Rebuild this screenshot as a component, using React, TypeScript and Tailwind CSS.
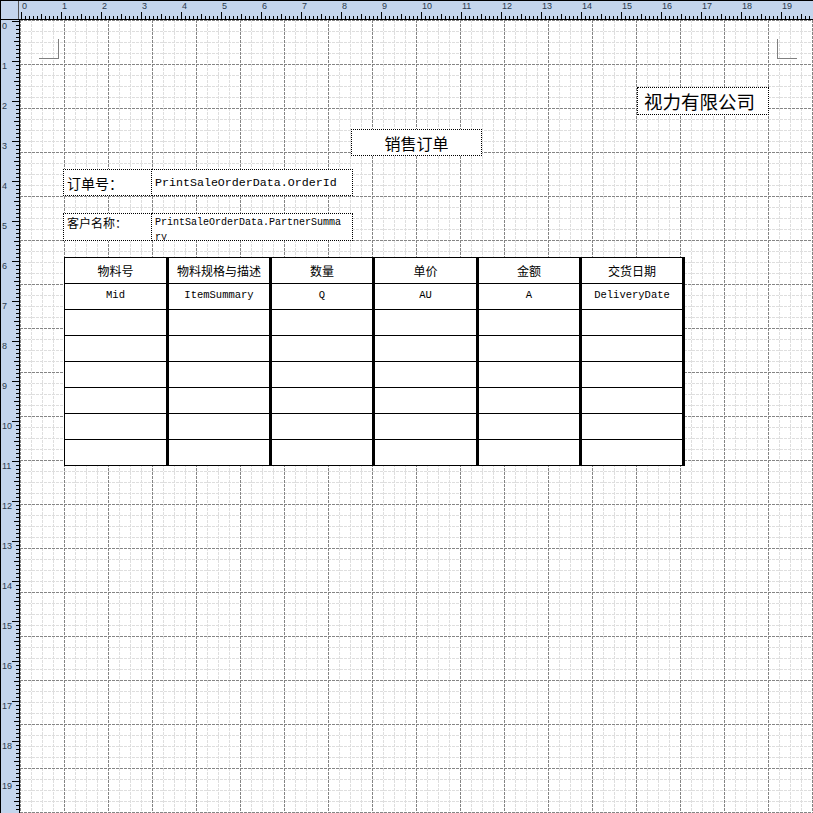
import React from "react";

const BLUE = "#c4d5ec";
const LABEL = "#2b3a4e";

function TopRuler() {
  const w = 793;
  const ticks = [];
  for (let k = 0; k <= 197; k++) {
    const x = 1 + 4 * k + 0.5;
    const len = k % 10 === 0 ? 7 : k % 5 === 0 ? 5 : 3;
    ticks.push(<line key={k} x1={x} x2={x} y1={19 - len} y2={19} stroke="#000" strokeWidth={1} />);
  }
  const labels = [];
  for (let n = 0; n <= 19; n++) {
    labels.push(
      <text key={n} x={1 + 40 * n + 1} y={9} fontSize={9} fill={LABEL} fontFamily="'Liberation Sans', Arial, sans-serif">
        {n}
      </text>
    );
  }
  return (
    <svg width={w} height={20} className="block">
      <rect x={0} y={0} width={w} height={20} fill={BLUE} />
      <line x1={0} x2={w} y1={0.5} y2={0.5} stroke="#000" />
      <line x1={0} x2={w} y1={19.5} y2={19.5} stroke="#000" />
      {ticks}
      {labels}
    </svg>
  );
}

function LeftRuler() {
  const h = 793;
  const ticks = [];
  for (let k = 0; k <= 197; k++) {
    const y = 1 + 4 * k + 0.5;
    const len = k % 10 === 0 ? 7 : k % 5 === 0 ? 5 : 3;
    ticks.push(<line key={k} y1={y} y2={y} x1={19 - len} x2={19} stroke="#000" strokeWidth={1} />);
  }
  const labels = [];
  for (let n = 0; n <= 19; n++) {
    labels.push(
      <text key={n} x={2} y={1 + 40 * n + 8} fontSize={9} fill={LABEL} fontFamily="'Liberation Sans', Arial, sans-serif">
        {n}
      </text>
    );
  }
  return (
    <svg width={20} height={h} className="block shrink-0">
      <rect x={0} y={0} width={20} height={h} fill={BLUE} />
      <line y1={0} y2={h} x1={0.5} x2={0.5} stroke="#000" />
      <line y1={0} y2={h} x1={19.5} x2={19.5} stroke="#000" />
      {ticks}
      {labels}
    </svg>
  );
}

function Grid() {
  const size = 793;
  const minor = [];
  const major = [];
  for (let k = 0; k <= 72; k++) {
    const p = 11 * k + 0.5;
    const arr = k % 4 === 0 ? major : minor;
    arr.push(<line key={"v" + k} x1={p} x2={p} y1={0} y2={size} />);
    arr.push(<line key={"h" + k} y1={p} y2={p} x1={0} x2={size} />);
  }
  return (
    <svg width={size} height={size} className="absolute left-0 top-0">
      <g stroke="#dedede" strokeWidth={1} strokeDasharray="3 1">
        {minor}
      </g>
      <g stroke="#858585" strokeWidth={1} strokeDasharray="3 1">
        {major}
      </g>
    </svg>
  );
}

const cjk = "font-['Noto_Sans_CJK_SC','Noto_Sans',sans-serif]";
const mono = "font-['Liberation_Mono','Courier_New',monospace]";

const headers = ["物料号", "物料规格与描述", "数量", "单价", "金额", "交货日期"];
const fields = ["Mid", "ItemSummary", "Q", "AU", "A", "DeliveryDate"];
const widths = ["w-[104px]", "w-[103px]", "w-[103px]", "w-[104px]", "w-[103px]", "w-[103px]"];

function Table() {
  const rows = [0, 1, 2, 3, 4, 5, 6, 7];
  return (
    <div className="absolute left-[44px] top-[237px] border-l border-t border-black bg-white flex flex-col">
      {rows.map((r) => (
        <div key={r} className="flex">
          {widths.map((w, c) => (
            <div
              key={c}
              className={`${w} h-[26px] border-r-[3px] border-b border-black flex items-center justify-center text-black`}
            >
              {r === 0 ? (
                <span className={`${cjk} text-[12px] leading-none`}>{headers[c]}</span>
              ) : r === 1 ? (
                <span className={`${mono} text-[10.5px] leading-none -mt-[2px]`}>{fields[c]}</span>
              ) : null}
            </div>
          ))}
        </div>
      ))}
    </div>
  );
}

export default function App() {
  return (
    <div className="w-[813px] h-[813px] bg-white overflow-hidden flex flex-col">
      <div className="flex h-[20px] shrink-0">
        <div className="w-[20px] h-[20px] shrink-0 bg-[#c4d5ec] border-t border-b border-l border-black">
          <div className="w-[18px] h-[18px] border-r border-[#555]" />
        </div>
        <TopRuler />
      </div>
      <div className="flex flex-1">
        <LeftRuler />
        <div className="relative w-[793px] h-[793px] bg-white">
          <Grid />
          {/* corner marks */}
          <div className="absolute left-[19px] top-[19px] w-[20px] h-[20px] border-r border-b border-[#808080]" />
          <div className="absolute left-[757px] top-[19px] w-[20px] h-[20px] border-l border-b border-[#808080]" />

          {/* company */}
          <div className="absolute left-[617px] top-[67px] w-[132px] h-[28px] border border-dotted border-black bg-white flex items-center pl-[6px]">
            <span className={`${cjk} text-[18.5px] leading-none text-black`}>视力有限公司</span>
          </div>

          {/* title */}
          <div className="absolute left-[331px] top-[109px] w-[131px] h-[27px] border border-dotted border-black bg-white flex items-center justify-center">
            <span className={`${cjk} text-[16px] leading-none text-black`}>销售订单</span>
          </div>

          {/* order id */}
          <div className="absolute left-[43px] top-[149px] w-[89px] h-[27px] border border-dotted border-black bg-white flex items-center pl-[3px]">
            <span className={`${cjk} text-[14px] leading-none text-black`}>订单号：</span>
          </div>
          <div className="absolute left-[131px] top-[149px] w-[202px] h-[27px] border border-dotted border-black bg-white flex items-center pl-[3px]">
            <span className={`${mono} text-[11.65px] leading-none text-black`}>PrintSaleOrderData.OrderId</span>
          </div>

          {/* partner */}
          <div className={`absolute left-[43px] top-[193px] w-[89px] h-[28px] border border-dotted border-black bg-white pl-[3px] pt-[3px] ${cjk} text-[12px] leading-[12px] text-black`}>
            客户名称：
          </div>
          <div className="absolute left-[131px] top-[193px] w-[202px] h-[28px] border border-dotted border-black bg-white pl-[3px] pt-[1px] overflow-hidden">
            <div className={`${mono} text-[10px] leading-[15px] text-black w-[188px] break-all`}>
              PrintSaleOrderData.PartnerSummary
            </div>
          </div>

          <Table />
        </div>
      </div>
    </div>
  );
}
